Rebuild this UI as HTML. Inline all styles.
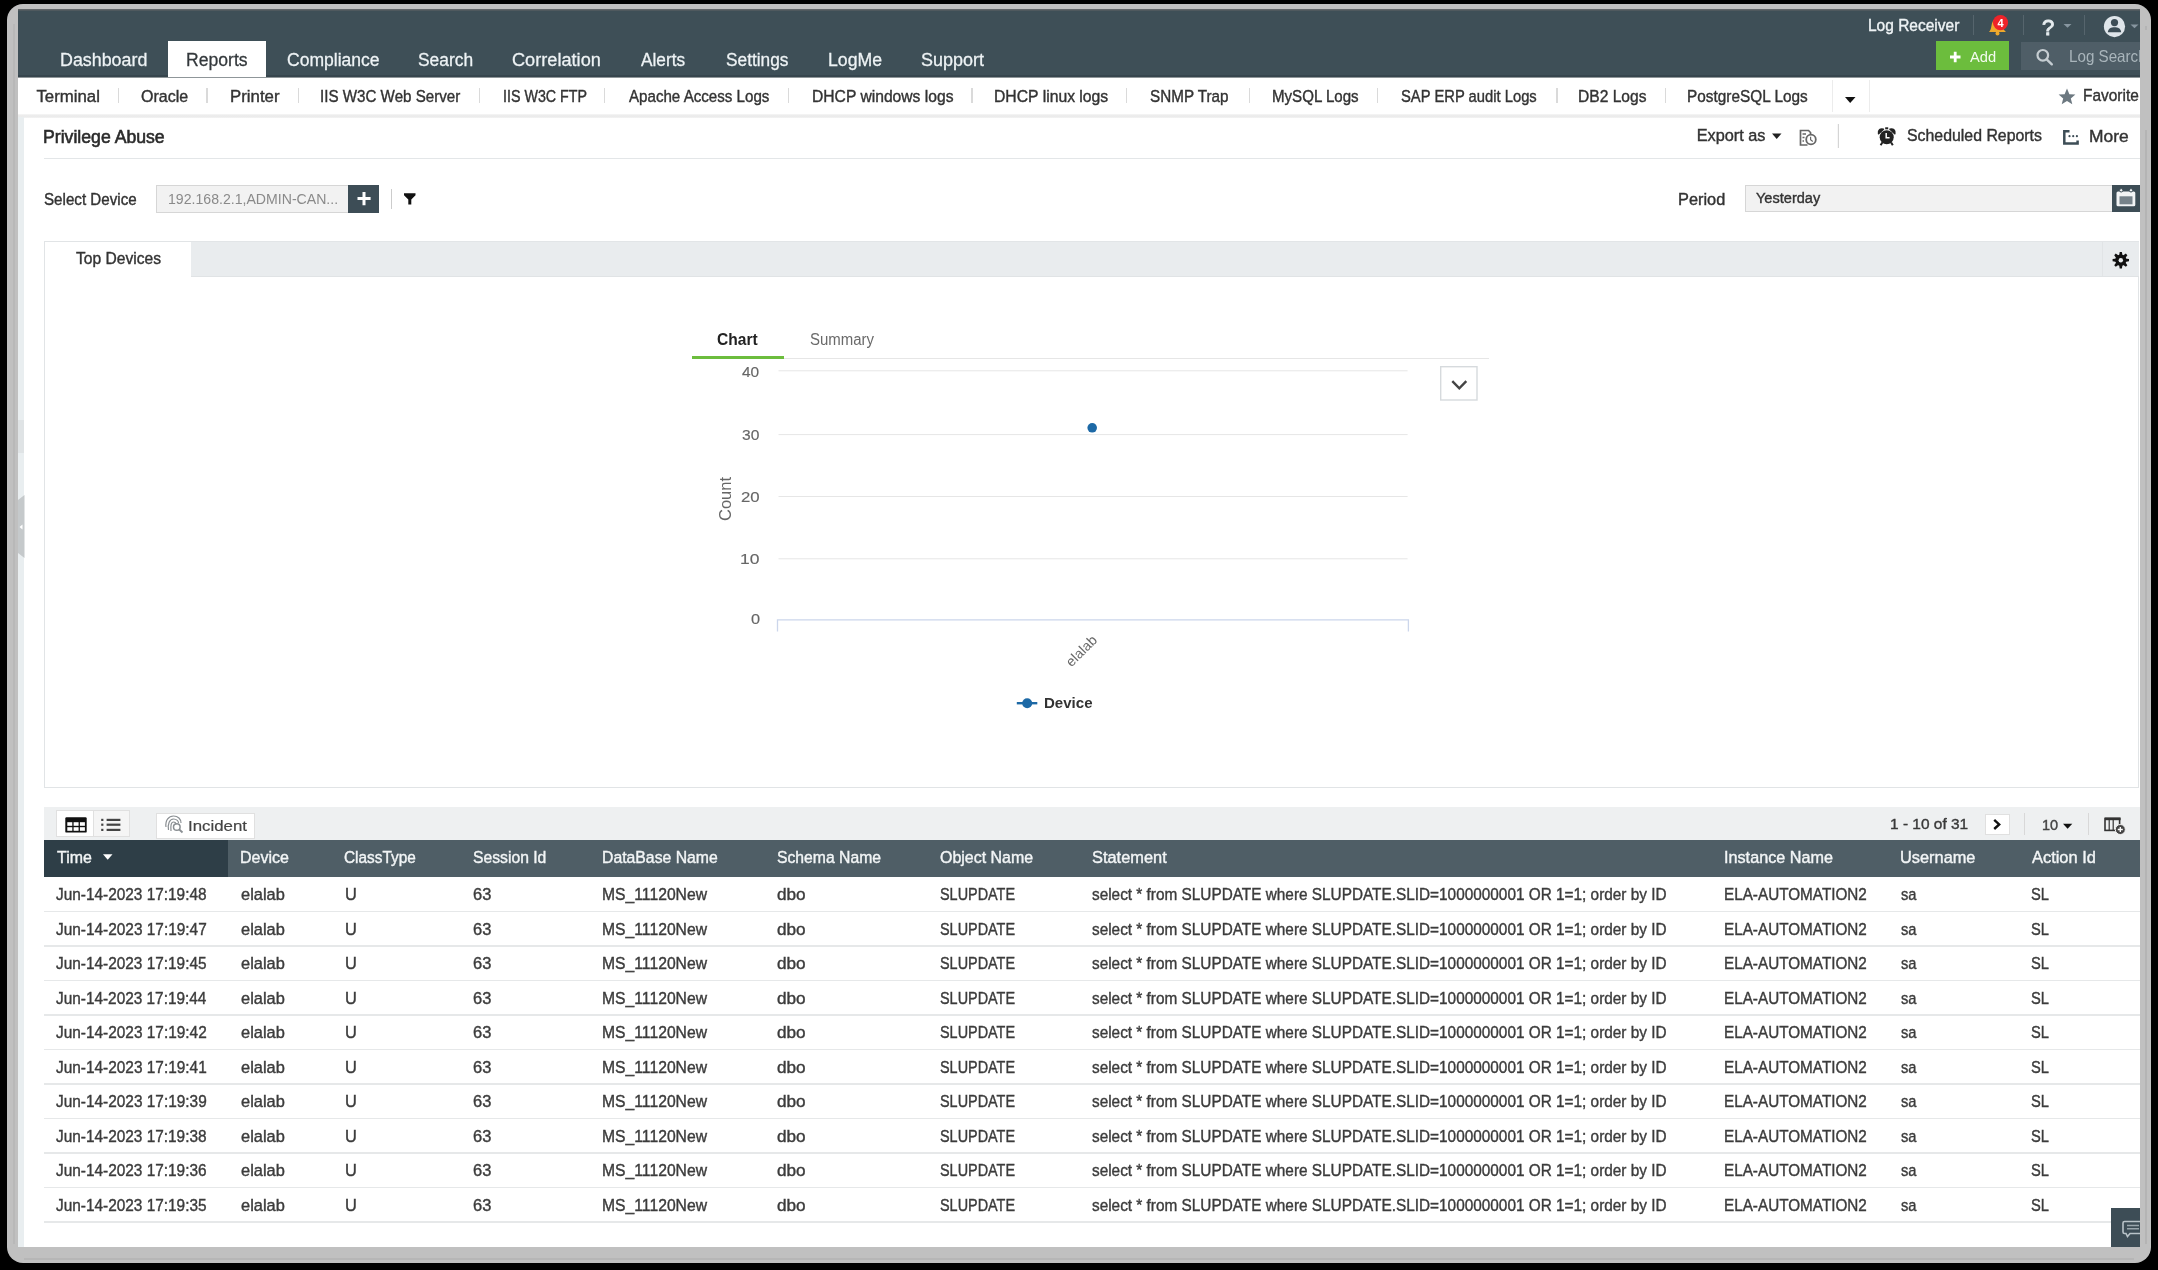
<!DOCTYPE html>
<html><head><meta charset="utf-8"><title>Privilege Abuse</title>
<style>
html,body{margin:0;padding:0}
body{width:2158px;height:1270px;background:#000;position:relative;overflow:hidden;font-family:"Liberation Sans",sans-serif}
.a{position:absolute;box-sizing:border-box}
.t{position:absolute;white-space:nowrap;line-height:1;font-family:"Liberation Sans",sans-serif}
svg{position:absolute;overflow:visible}
</style></head><body><div id="root" style="position:absolute;left:0;top:0;width:2158px;height:1270px;filter:blur(0.6px)">
<!-- frame -->
<div class="a" style="left:7px;top:4px;width:2144px;height:1259px;background:#c0c0c0;border-radius:16px"></div>
<div class="a" style="left:12.6px;top:24px;width:2.9px;height:1220px;background:#b8b8b8"></div>
<div class="a" style="left:2144.5px;top:26px;width:2px;height:1218px;background:#b4b4b4"></div>
<div class="a" style="left:24px;top:1257.5px;width:2110px;height:2px;background:#b6b6b6"></div>
<div class="a" style="left:18px;top:9px;width:2122px;height:1238px;background:#fff"></div>
<!-- header -->
<div class="a" style="left:18px;top:9px;width:2122px;height:68px;background:#3e4f57"></div>
<div class="a" style="left:18px;top:9px;width:2122px;height:1px;background:#626669"></div>
<div class="a" style="left:18px;top:10px;width:2122px;height:1px;background:#4f595e"></div>
<div class="a" style="left:18px;top:75px;width:2122px;height:2px;background:#36454d"></div>
<div class="a" style="left:18px;top:77px;width:2122px;height:1px;background:#8f9699"></div>
<div class="a" style="left:168px;top:41px;width:98px;height:36px;background:#fff"></div>
<!-- header right -->
<div class="a" style="left:1973px;top:15px;width:1px;height:20px;background:#56656d"></div>
<div class="a" style="left:2023px;top:15px;width:1px;height:20px;background:#56656d"></div>
<div class="a" style="left:2084px;top:15px;width:1px;height:20px;background:#56656d"></div>
<div class="a" style="left:1936px;top:41px;width:73px;height:29px;background:#6cbd3d"></div>
<div class="a" style="left:2021px;top:42px;width:119px;height:28px;background:#4f5e67"></div>
<!-- subnav -->
<div class="a" style="left:18px;top:114px;width:2122px;height:4px;background:linear-gradient(#f6f6f6,#e9e9e9 50%,#f3f3f3)"></div>
<!-- left strip -->
<div class="a" style="left:18px;top:117px;width:6px;height:1130px;background:#e9eef0"></div>
<div class="a" style="left:18px;top:420px;width:6px;height:33px;background:#dfe3e5"></div>
<!-- title line -->
<div class="a" style="left:44px;top:158px;width:2096px;height:1px;background:#e3e6e8"></div>
<!-- select device input -->
<div class="a" style="left:156px;top:185px;width:193px;height:28px;background:#f2f2f2;border:1px solid #d6d6d6"></div>
<div class="a" style="left:348px;top:185px;width:31px;height:28px;background:#3d4d56"></div>
<div class="a" style="left:391px;top:189px;width:1px;height:20px;background:#ccc"></div>
<!-- period input -->
<div class="a" style="left:1745px;top:185px;width:368px;height:27px;background:#f2f2f2;border:1px solid #d6d6d6"></div>
<div class="a" style="left:2112px;top:185px;width:28px;height:27px;background:#3d4d56"></div>
<!-- panel -->
<div class="a" style="left:44px;top:241px;width:2095px;height:547px;border:1px solid #e1e4e6"></div>
<div class="a" style="left:191px;top:241px;width:1948px;height:36px;background:#e9ecee;border-bottom:1px solid #e0e3e5;border-top:1px solid #e2e5e7"></div>
<div class="a" style="left:2102px;top:242px;width:1px;height:34px;background:#e1e4e6"></div>
<!-- chart tabs -->
<div class="a" style="left:692px;top:358px;width:797px;height:1px;background:#e6e6e6"></div>
<div class="a" style="left:692px;top:356px;width:92px;height:3px;background:#6cbd3d"></div>
<!-- toolbar band -->
<div class="a" style="left:44px;top:807px;width:2096px;height:34px;background:#eef0f1"></div>
<div class="a" style="left:56px;top:810px;width:74px;height:27px;background:#fff;border:1px solid #e0e0e0"></div>
<div class="a" style="left:93px;top:811px;width:36px;height:25px;background:#f5f5f5;border-left:1px solid #e0e0e0"></div>
<div class="a" style="left:156px;top:813px;width:99px;height:26px;background:#fff;border:1px solid #e0e0e0"></div>
<div class="a" style="left:1985px;top:814px;width:25px;height:21px;background:#fff;border:1px solid #e0e0e0"></div>
<div class="a" style="left:2024px;top:813px;width:1px;height:22px;background:#d8d8d8"></div>
<div class="a" style="left:2088px;top:813px;width:1px;height:22px;background:#d8d8d8"></div>
<!-- table header -->
<div class="a" style="left:44px;top:840px;width:2096px;height:37px;background:#4f5e66"></div>
<div class="a" style="left:44px;top:840px;width:184px;height:37px;background:#2e3e47"></div>
<!-- row seps -->
<div class="a" style="left:44px;top:910.5px;width:2096px;height:1.5px;background:#e6e8e9"></div>
<div class="a" style="left:44px;top:945.0px;width:2096px;height:1.5px;background:#e6e8e9"></div>
<div class="a" style="left:44px;top:979.5px;width:2096px;height:1.5px;background:#e6e8e9"></div>
<div class="a" style="left:44px;top:1014.1px;width:2096px;height:1.5px;background:#e6e8e9"></div>
<div class="a" style="left:44px;top:1048.6px;width:2096px;height:1.5px;background:#e6e8e9"></div>
<div class="a" style="left:44px;top:1083.1px;width:2096px;height:1.5px;background:#e6e8e9"></div>
<div class="a" style="left:44px;top:1117.6px;width:2096px;height:1.5px;background:#e6e8e9"></div>
<div class="a" style="left:44px;top:1152.1px;width:2096px;height:1.5px;background:#e6e8e9"></div>
<div class="a" style="left:44px;top:1186.7px;width:2096px;height:1.5px;background:#e6e8e9"></div>
<div class="a" style="left:44px;top:1221.2px;width:2096px;height:1.5px;background:#e6e8e9"></div>
<!-- subnav separators -->
<div class="a" style="left:117.9px;top:87.5px;width:1.4px;height:15px;background:#dadada"></div>
<div class="a" style="left:206.3px;top:87.5px;width:1.4px;height:15px;background:#dadada"></div>
<div class="a" style="left:298.0px;top:87.5px;width:1.4px;height:15px;background:#dadada"></div>
<div class="a" style="left:478.5px;top:87.5px;width:1.4px;height:15px;background:#dadada"></div>
<div class="a" style="left:604.1px;top:87.5px;width:1.4px;height:15px;background:#dadada"></div>
<div class="a" style="left:787.8px;top:87.5px;width:1.4px;height:15px;background:#dadada"></div>
<div class="a" style="left:971.2px;top:87.5px;width:1.4px;height:15px;background:#dadada"></div>
<div class="a" style="left:1125.5px;top:87.5px;width:1.4px;height:15px;background:#dadada"></div>
<div class="a" style="left:1248.5px;top:87.5px;width:1.4px;height:15px;background:#dadada"></div>
<div class="a" style="left:1376.9px;top:87.5px;width:1.4px;height:15px;background:#dadada"></div>
<div class="a" style="left:1556.2px;top:87.5px;width:1.4px;height:15px;background:#dadada"></div>
<div class="a" style="left:1664.5px;top:87.5px;width:1.4px;height:15px;background:#dadada"></div>
<div class="a" style="left:1831.5px;top:80px;width:1px;height:32px;background:#ececec"></div>
<div class="a" style="left:1868.5px;top:80px;width:1px;height:32px;background:#ececec"></div>
<!-- icons -->
<svg style="left:0;top:0" width="2158" height="1270" viewBox="0 0 2158 1270">
 <!-- subnav caret -->
 <path d="M1845 97 L1855.5 97 L1850.2 103 Z" fill="#111"/>
 <!-- bell -->
 <path d="M1989 32 C1992 29 1991 24 1993 21 C1995 18 1999 18 2001 21 C2003 24 2002 29 2006 32 Z" fill="#eea92c"/>
 <circle cx="1997.5" cy="33.5" r="2" fill="#eea92c"/>
 <circle cx="2000.5" cy="22.6" r="7.6" fill="#ef2329"/>
 <text x="2000.5" y="27" font-family="Liberation Sans" font-weight="700" font-size="11" fill="#fff" text-anchor="middle">4</text>
 <!-- ? -->
 <text x="2048.2" y="35.3" font-family="Liberation Sans" font-weight="400" font-size="22" fill="#e6ecef" stroke="#e6ecef" stroke-width="0.9" text-anchor="middle">?</text>
 <path d="M2063.5 24 L2071.5 24 L2067.5 27.8 Z" fill="#8796a0"/>
 <!-- user -->
 <circle cx="2114.5" cy="26.6" r="10.6" fill="#dfe5ea"/>
 <circle cx="2114.5" cy="22.6" r="3.6" fill="#3d4d56"/>
 <path d="M2107.8 32.2 C2108.5 28 2111 27.2 2114.5 27.2 C2118 27.2 2120.5 28 2121.2 32.2 Z" fill="#3d4d56"/>
 <path d="M2130.5 24.5 L2138.5 24.5 L2134.5 28.3 Z" fill="#8796a0"/>
 <!-- add plus -->
 <path d="M1950 57 H1960.5 M1955.2 51.8 V62.2" stroke="#fff" stroke-width="2.8"/>
 <!-- search icon -->
 <circle cx="2042.8" cy="55.3" r="5.3" fill="none" stroke="#c5cdd2" stroke-width="2.2"/>
 <path d="M2046.7 59.3 L2051.8 64.3" stroke="#c5cdd2" stroke-width="2.4" stroke-linecap="round"/>
 <!-- star -->
 <path d="M2067 88.5 L2069.4 94.2 L2075.4 94.6 L2070.8 98.5 L2072.3 104.2 L2067 101 L2061.7 104.2 L2063.2 98.5 L2058.6 94.6 L2064.6 94.2 Z" fill="#6c7880"/>
 <!-- export caret -->
 <path d="M1772 133.5 L1781.5 133.5 L1776.7 139 Z" fill="#222"/>
 <!-- export icon -->
 <path d="M1807.5 145 H1800.5 V130.5 H1808.5 L1810.5 132.5 V134" fill="none" stroke="#666" stroke-width="1.7"/>
 <path d="M1802.5 134 H1806 M1802.5 137.5 H1804.5 M1802.5 141 H1804" stroke="#666" stroke-width="1.4"/>
 <circle cx="1811" cy="139.5" r="4.8" fill="#fff" stroke="#666" stroke-width="1.8"/>
 <path d="M1810.6 136.8 V139.8 L1812.8 141.5" fill="none" stroke="#666" stroke-width="1.2"/>
 <!-- separator -->
 <rect x="1837.8" y="124" width="1.2" height="24" fill="#d5d5d5"/>
 <!-- alarm clock -->
 <circle cx="1886.7" cy="137.3" r="7" fill="#222"/>
 <path d="M1878.6 133.6 C1878 130 1880.5 128.3 1883.4 129.2 Z" fill="#222" stroke="#222" stroke-width="1.6" stroke-linejoin="round"/>
 <path d="M1894.8 133.6 C1895.4 130 1892.9 128.3 1890 129.2 Z" fill="#222" stroke="#222" stroke-width="1.6" stroke-linejoin="round"/>
 <rect x="1885.2" y="127.3" width="3" height="2" fill="#222"/>
 <path d="M1882.3 142.5 L1880.6 145.3 M1891.1 142.5 L1892.8 145.3" stroke="#222" stroke-width="2"/>
 <path d="M1886.2 133 V137.8 H1889.6" fill="none" stroke="#fff" stroke-width="1.5"/>
 <!-- more icon -->
 <path d="M2069.5 131.2 H2064.3 V143.4 H2077.6 V140.4" fill="none" stroke="#3d4d56" stroke-width="2.5"/>
 <circle cx="2069.5" cy="136.2" r="1.1" fill="#3d4d56"/><circle cx="2073.2" cy="136.2" r="1.1" fill="#3d4d56"/><circle cx="2076.9" cy="136.2" r="1.1" fill="#3d4d56"/>
 <!-- plus in select device -->
 <path d="M357.5 198.6 H370.6 M364 192 V205.2" stroke="#fff" stroke-width="3"/>
 <!-- filter -->
 <path d="M404 193.3 H415.5 V195.3 L411.3 199.5 V204.6 L408.3 204.6 V199.5 L404 195.3 Z" fill="#111"/>
 <!-- calendar -->
 <rect x="2116.5" y="191.5" width="18.8" height="14.8" rx="1.5" fill="#f2f4f5"/>
 <rect x="2119.5" y="196.3" width="13" height="8" fill="#76828a"/>
 <circle cx="2121.2" cy="190.3" r="1.7" fill="#f2f4f5" stroke="#3d4d56" stroke-width="1"/>
 <circle cx="2131" cy="190.3" r="1.7" fill="#f2f4f5" stroke="#3d4d56" stroke-width="1"/>
 <!-- gear -->
 <g transform="translate(2120.8 260.2)" fill="#111">
  <circle r="5.6"/>
  <g id="tooth"><path d="M-1.1 -8.2 H1.1 L1.8 -4 H-1.8 Z"/></g>
  <use href="#tooth" transform="rotate(45)"/><use href="#tooth" transform="rotate(90)"/><use href="#tooth" transform="rotate(135)"/>
  <use href="#tooth" transform="rotate(180)"/><use href="#tooth" transform="rotate(225)"/><use href="#tooth" transform="rotate(270)"/><use href="#tooth" transform="rotate(315)"/>
  <circle r="2.2" fill="#e9ecee"/>
 </g>
 <!-- chart gridlines -->
 <g stroke="#e6e6e6" stroke-width="1">
  <path d="M778.5 370.8 H1407.6 M778.5 434.6 H1407.6 M778.5 496.5 H1407.6 M778.5 558.8 H1407.6"/>
 </g>
 <path d="M777.5 631.5 V619.8 H1408.4 V631.5" fill="none" stroke="#ccd6eb" stroke-width="1.3"/>
 <circle cx="1092.2" cy="427.8" r="4.8" fill="#1d69a6"/>
 <!-- dropdown btn -->
 <rect x="1440.7" y="366.7" width="36.3" height="33.3" fill="#fff" stroke="#d6dadd" stroke-width="1.4"/>
 <path d="M1452.3 381.2 L1459.3 388.3 L1466.3 381.2" fill="none" stroke="#444" stroke-width="2.4"/>
 <!-- legend -->
 <path d="M1016.8 703.2 H1037.3" stroke="#1d69a6" stroke-width="2.4"/>
 <circle cx="1027.2" cy="703.3" r="5" fill="#1d69a6"/>
 <!-- grid icon -->
 <rect x="65.3" y="817.2" width="21.4" height="15.4" rx="1.2" fill="#111"/>
 <g fill="#fff"><rect x="67.3" y="822.2" width="5" height="3.6"/><rect x="73.6" y="822.2" width="5" height="3.6"/><rect x="79.9" y="822.2" width="5" height="3.6"/>
 <rect x="67.3" y="827.2" width="5" height="3.6"/><rect x="73.6" y="827.2" width="5" height="3.6"/><rect x="79.9" y="827.2" width="5" height="3.6"/></g>
 <!-- list icon -->
 <g fill="#444"><rect x="101.2" y="818.8" width="2.2" height="2.2"/><rect x="101.2" y="823.6" width="2.2" height="2.2"/><rect x="101.2" y="828.8" width="2.2" height="2.2"/>
 <rect x="106.6" y="818.8" width="13.8" height="2.2"/><rect x="106.6" y="823.6" width="13.8" height="2.2"/><rect x="106.6" y="828.8" width="13.8" height="2.2"/></g>
 <!-- incident icon -->
 <g fill="none" stroke="#8a8f93" stroke-width="1.2">
  <path d="M166 827 C165 820 169 816 173.5 816 C178 816 181 819 181 823"/>
  <path d="M168.5 830 C167.5 824 169.5 819 173.5 819 C177 819 178.5 821.5 178.5 823"/>
  <path d="M171 831 C170.5 826 171 822 173.5 822 C175.5 822 176 823.5 176 824.5"/>
  <circle cx="176.8" cy="827" r="3.3" stroke-width="1.5"/>
  <path d="M179.3 829.5 L182.5 832.5" stroke-width="1.8"/>
 </g>
 <!-- next chevron -->
 <path d="M1994.2 819.8 L1999.2 824.4 L1994.2 829" fill="none" stroke="#111" stroke-width="2.4"/>
 <!-- 10 caret -->
 <path d="M2063 823.7 L2072.3 823.7 L2067.6 828.8 Z" fill="#111"/>
 <!-- column icon -->
 <rect x="2105" y="818.4" width="14.6" height="12" fill="none" stroke="#333" stroke-width="1.6"/>
 <rect x="2105" y="817.6" width="15.6" height="2.6" fill="#333"/>
 <path d="M2109.2 819 V830.5 M2113.2 819 V830.5" stroke="#333" stroke-width="1.2"/>
 <circle cx="2120.3" cy="829.5" r="5" fill="#444" stroke="#f0f0f0" stroke-width="1"/>
 <path d="M2117.8 829.5 H2122.8 M2120.3 827 V832" stroke="#fff" stroke-width="1.3"/>
 <!-- sort caret -->
 <path d="M103 854.2 L112.5 854.2 L107.7 859.8 Z" fill="#fff"/>
 <!-- left handle -->
 <path d="M18 500 L24.5 495 V558 L18 553 Z" fill="#c5c9cb"/>
 <path d="M19.5 527 L22.5 524.5 V529.5 Z" fill="#fff"/>
</svg>
<!-- chat bubble -->
<div class="a" style="left:2111px;top:1208px;width:29px;height:39px;background:#3d4d56"></div>
<svg style="left:0;top:0" width="2158" height="1270">
 <path d="M2124.5 1221.5 H2140 M2124.5 1221.5 C2123.5 1221.5 2123 1222 2123 1223 V1232 C2123 1233 2123.5 1233.5 2124.5 1233.5 H2126 L2127.5 1236.5 L2130 1233.5 H2140" fill="none" stroke="#b9c3c8" stroke-width="1.6"/>
 <path d="M2127 1225.5 H2139 M2127 1228.8 H2139" stroke="#9aa6ac" stroke-width="1.6"/>
</svg>

<div class="t" style="left:59.57px;top:51.00px;font-size:18.30px;color:#eef3f5;font-weight:400;transform:scaleX(0.9766);transform-origin:0 0;-webkit-text-stroke:0.28px currentColor;">Dashboard</div>
<div class="t" style="left:286.92px;top:51.00px;font-size:18.30px;color:#eef3f5;font-weight:400;transform:scaleX(0.9595);transform-origin:0 0;-webkit-text-stroke:0.28px currentColor;">Compliance</div>
<div class="t" style="left:418.30px;top:51.00px;font-size:18.30px;color:#eef3f5;font-weight:400;transform:scaleX(0.9516);transform-origin:0 0;-webkit-text-stroke:0.28px currentColor;">Search</div>
<div class="t" style="left:512.09px;top:51.00px;font-size:18.30px;color:#eef3f5;font-weight:400;transform:scaleX(0.9936);transform-origin:0 0;-webkit-text-stroke:0.28px currentColor;">Correlation</div>
<div class="t" style="left:641.40px;top:51.00px;font-size:18.30px;color:#eef3f5;font-weight:400;transform:scaleX(0.9431);transform-origin:0 0;-webkit-text-stroke:0.28px currentColor;">Alerts</div>
<div class="t" style="left:725.81px;top:51.00px;font-size:18.30px;color:#eef3f5;font-weight:400;transform:scaleX(0.9454);transform-origin:0 0;-webkit-text-stroke:0.28px currentColor;">Settings</div>
<div class="t" style="left:827.59px;top:51.00px;font-size:18.30px;color:#eef3f5;font-weight:400;transform:scaleX(0.9660);transform-origin:0 0;-webkit-text-stroke:0.28px currentColor;">LogMe</div>
<div class="t" style="left:920.98px;top:51.00px;font-size:18.30px;color:#eef3f5;font-weight:400;transform:scaleX(0.9826);transform-origin:0 0;-webkit-text-stroke:0.28px currentColor;">Support</div>
<div class="t" style="left:185.89px;top:51.00px;font-size:18.30px;color:#33383b;font-weight:400;transform:scaleX(0.9619);transform-origin:0 0;-webkit-text-stroke:0.28px currentColor;">Reports</div>
<div class="t" style="left:1867.76px;top:18.00px;font-size:16.80px;color:#eef3f5;font-weight:400;transform:scaleX(0.9238);transform-origin:0 0;-webkit-text-stroke:0.4px currentColor;">Log Receiver</div>
<div class="t" style="left:1969.70px;top:49.00px;font-size:15.20px;color:#f4fbef;font-weight:400;transform:scaleX(0.9660);transform-origin:0 0;">Add</div>
<div class="t" style="left:2068.79px;top:48.00px;font-size:16.50px;color:#a9b5bb;font-weight:400;transform:scaleX(0.9200);transform-origin:0 0;">Log Search</div>
<div class="t" style="left:36.46px;top:89.00px;font-size:16.80px;color:#333;font-weight:400;-webkit-text-stroke:0.4px currentColor;">Terminal</div>
<div class="t" style="left:141.36px;top:89.00px;font-size:16.80px;color:#333;font-weight:400;transform:scaleX(0.9543);transform-origin:0 0;-webkit-text-stroke:0.4px currentColor;">Oracle</div>
<div class="t" style="left:230.05px;top:89.00px;font-size:16.80px;color:#333;font-weight:400;-webkit-text-stroke:0.4px currentColor;">Printer</div>
<div class="t" style="left:320.24px;top:89.00px;font-size:16.80px;color:#333;font-weight:400;transform:scaleX(0.9027);transform-origin:0 0;-webkit-text-stroke:0.4px currentColor;">IIS W3C Web Server</div>
<div class="t" style="left:502.51px;top:89.00px;font-size:16.80px;color:#333;font-weight:400;transform:scaleX(0.8506);transform-origin:0 0;-webkit-text-stroke:0.4px currentColor;">IIS W3C FTP</div>
<div class="t" style="left:628.90px;top:89.00px;font-size:16.80px;color:#333;font-weight:400;transform:scaleX(0.9010);transform-origin:0 0;-webkit-text-stroke:0.4px currentColor;">Apache Access Logs</div>
<div class="t" style="left:811.55px;top:89.00px;font-size:16.80px;color:#333;font-weight:400;transform:scaleX(0.9326);transform-origin:0 0;-webkit-text-stroke:0.4px currentColor;">DHCP windows logs</div>
<div class="t" style="left:994.24px;top:89.00px;font-size:16.80px;color:#333;font-weight:400;transform:scaleX(0.9372);transform-origin:0 0;-webkit-text-stroke:0.4px currentColor;">DHCP linux logs</div>
<div class="t" style="left:1150.39px;top:89.00px;font-size:16.80px;color:#333;font-weight:400;transform:scaleX(0.9086);transform-origin:0 0;-webkit-text-stroke:0.4px currentColor;">SNMP Trap</div>
<div class="t" style="left:1271.79px;top:89.00px;font-size:16.80px;color:#333;font-weight:400;transform:scaleX(0.8986);transform-origin:0 0;-webkit-text-stroke:0.4px currentColor;">MySQL Logs</div>
<div class="t" style="left:1401.01px;top:89.00px;font-size:16.80px;color:#333;font-weight:400;transform:scaleX(0.8801);transform-origin:0 0;-webkit-text-stroke:0.4px currentColor;">SAP ERP audit Logs</div>
<div class="t" style="left:1578.35px;top:89.00px;font-size:16.80px;color:#333;font-weight:400;transform:scaleX(0.9287);transform-origin:0 0;-webkit-text-stroke:0.4px currentColor;">DB2 Logs</div>
<div class="t" style="left:1686.77px;top:89.00px;font-size:16.80px;color:#333;font-weight:400;transform:scaleX(0.9154);transform-origin:0 0;-webkit-text-stroke:0.4px currentColor;">PostgreSQL Logs</div>
<div class="t" style="left:2082.76px;top:88.00px;font-size:16.80px;color:#333;font-weight:400;transform:scaleX(0.9200);transform-origin:0 0;-webkit-text-stroke:0.4px currentColor;">Favorite</div>
<div class="t" style="left:42.99px;top:128.00px;font-size:18.00px;color:#2b2b2b;font-weight:400;transform:scaleX(0.9807);transform-origin:0 0;-webkit-text-stroke:0.6px #2b2b2b;">Privilege Abuse</div>
<div class="t" style="left:1696.70px;top:127.00px;font-size:16.30px;color:#333;font-weight:400;-webkit-text-stroke:0.4px currentColor;">Export as</div>
<div class="t" style="left:1907.36px;top:127.00px;font-size:16.30px;color:#333;font-weight:400;transform:scaleX(0.9746);transform-origin:0 0;-webkit-text-stroke:0.4px currentColor;">Scheduled Reports</div>
<div class="t" style="left:2089.11px;top:128.00px;font-size:16.30px;color:#333;font-weight:400;transform:scaleX(1.0697);transform-origin:0 0;-webkit-text-stroke:0.4px currentColor;">More</div>
<div class="t" style="left:43.79px;top:192.00px;font-size:16.80px;color:#333;font-weight:400;transform:scaleX(0.9031);transform-origin:0 0;-webkit-text-stroke:0.4px currentColor;">Select Device</div>
<div class="t" style="left:167.71px;top:192.00px;font-size:14.50px;color:#8a8a8a;font-weight:400;transform:scaleX(0.9728);transform-origin:0 0;">192.168.2.1,ADMIN-CAN...</div>
<div class="t" style="left:1678.29px;top:191.00px;font-size:16.50px;color:#333;font-weight:400;transform:scaleX(0.9901);transform-origin:0 0;-webkit-text-stroke:0.4px currentColor;">Period</div>
<div class="t" style="left:1756.21px;top:190.00px;font-size:15.50px;color:#333;font-weight:400;transform:scaleX(0.9389);transform-origin:0 0;-webkit-text-stroke:0.4px currentColor;">Yesterday</div>
<div class="t" style="left:76.09px;top:250.00px;font-size:16.50px;color:#333;font-weight:400;transform:scaleX(0.9467);transform-origin:0 0;-webkit-text-stroke:0.4px currentColor;">Top Devices</div>
<div class="t" style="left:717.38px;top:331.00px;font-size:16.30px;color:#222;font-weight:700;transform:scaleX(0.9555);transform-origin:0 0;">Chart</div>
<div class="t" style="left:810.40px;top:332.00px;font-size:15.80px;color:#6a6a6a;font-weight:400;transform:scaleX(0.9483);transform-origin:0 0;">Summary</div>
<div class="t" style="left:1043.90px;top:695.00px;font-size:15.50px;color:#333;font-weight:700;transform:scaleX(0.9703);transform-origin:0 0;">Device</div>
<div class="t" style="left:188.18px;top:818.00px;font-size:15.40px;color:#444;font-weight:400;transform:scaleX(1.0935);transform-origin:0 0;-webkit-text-stroke:0.2px currentColor;">Incident</div>
<div class="t" style="left:1889.92px;top:816.00px;font-size:15.40px;color:#3a3a3a;font-weight:400;transform:scaleX(1.0037);transform-origin:0 0;-webkit-text-stroke:0.4px currentColor;">1 - 10 of 31</div>
<div class="t" style="left:2041.98px;top:818.00px;font-size:14.80px;color:#444;font-weight:400;transform:scaleX(0.9805);transform-origin:0 0;-webkit-text-stroke:0.4px currentColor;">10</div>
<div class="t" style="left:742.39px;top:365.00px;font-size:14.80px;color:#666;font-weight:400;transform:scaleX(1.0428);transform-origin:0 0;-webkit-text-stroke:0.15px #666;">40</div>
<div class="t" style="left:742.23px;top:428.00px;font-size:14.80px;color:#666;font-weight:400;transform:scaleX(1.0528);transform-origin:0 0;-webkit-text-stroke:0.15px #666;">30</div>
<div class="t" style="left:740.56px;top:490.00px;font-size:14.80px;color:#666;font-weight:400;transform:scaleX(1.1325);transform-origin:0 0;-webkit-text-stroke:0.15px #666;">20</div>
<div class="t" style="left:740.18px;top:552.00px;font-size:14.80px;color:#666;font-weight:400;transform:scaleX(1.1819);transform-origin:0 0;-webkit-text-stroke:0.15px #666;">10</div>
<div class="t" style="left:750.51px;top:612.00px;font-size:14.80px;color:#666;font-weight:400;transform:scaleX(1.1031);transform-origin:0 0;-webkit-text-stroke:0.15px #666;">0</div>
<div class="t" style="left:56.68px;top:849.00px;font-size:16.30px;color:#f2f5f6;font-weight:400;transform:scaleX(0.9798);transform-origin:0 0;-webkit-text-stroke:0.4px currentColor;">Time</div>
<div class="t" style="left:240.12px;top:849.00px;font-size:16.30px;color:#f2f5f6;font-weight:400;transform:scaleX(0.9848);transform-origin:0 0;-webkit-text-stroke:0.4px currentColor;">Device</div>
<div class="t" style="left:344.23px;top:849.00px;font-size:16.30px;color:#f2f5f6;font-weight:400;transform:scaleX(0.9452);transform-origin:0 0;-webkit-text-stroke:0.4px currentColor;">ClassType</div>
<div class="t" style="left:472.97px;top:849.00px;font-size:16.30px;color:#f2f5f6;font-weight:400;transform:scaleX(0.9645);transform-origin:0 0;-webkit-text-stroke:0.4px currentColor;">Session Id</div>
<div class="t" style="left:602.34px;top:849.00px;font-size:16.30px;color:#f2f5f6;font-weight:400;transform:scaleX(0.9694);transform-origin:0 0;-webkit-text-stroke:0.4px currentColor;">DataBase Name</div>
<div class="t" style="left:777.37px;top:849.00px;font-size:16.30px;color:#f2f5f6;font-weight:400;transform:scaleX(0.9666);transform-origin:0 0;-webkit-text-stroke:0.4px currentColor;">Schema Name</div>
<div class="t" style="left:940.36px;top:849.00px;font-size:16.30px;color:#f2f5f6;font-weight:400;transform:scaleX(0.9800);transform-origin:0 0;-webkit-text-stroke:0.4px currentColor;">Object Name</div>
<div class="t" style="left:1092.14px;top:849.00px;font-size:16.30px;color:#f2f5f6;font-weight:400;transform:scaleX(1.0071);transform-origin:0 0;-webkit-text-stroke:0.4px currentColor;">Statement</div>
<div class="t" style="left:1724.04px;top:849.00px;font-size:16.30px;color:#f2f5f6;font-weight:400;transform:scaleX(0.9956);transform-origin:0 0;-webkit-text-stroke:0.4px currentColor;">Instance Name</div>
<div class="t" style="left:1900.05px;top:849.00px;font-size:16.30px;color:#f2f5f6;font-weight:400;transform:scaleX(1.0047);transform-origin:0 0;-webkit-text-stroke:0.4px currentColor;">Username</div>
<div class="t" style="left:2032.00px;top:849.00px;font-size:16.30px;color:#f2f5f6;font-weight:400;transform:scaleX(1.0078);transform-origin:0 0;-webkit-text-stroke:0.4px currentColor;">Action Id</div>
<div class="t" style="left:55.85px;top:887.00px;font-size:16.80px;color:#3c3c3c;font-weight:400;transform:scaleX(0.9167);transform-origin:0 0;-webkit-text-stroke:0.4px currentColor;">Jun-14-2023 17:19:48</div>
<div class="t" style="left:240.74px;top:887.00px;font-size:16.80px;color:#3c3c3c;font-weight:400;transform:scaleX(0.9780);transform-origin:0 0;-webkit-text-stroke:0.4px currentColor;">elalab</div>
<div class="t" style="left:344.95px;top:887.00px;font-size:16.80px;color:#3c3c3c;font-weight:400;transform:scaleX(0.9750);transform-origin:0 0;-webkit-text-stroke:0.4px currentColor;">U</div>
<div class="t" style="left:472.78px;top:887.00px;font-size:16.80px;color:#3c3c3c;font-weight:400;transform:scaleX(0.9803);transform-origin:0 0;-webkit-text-stroke:0.4px currentColor;">63</div>
<div class="t" style="left:602.34px;top:887.00px;font-size:16.80px;color:#3c3c3c;font-weight:400;transform:scaleX(0.9356);transform-origin:0 0;-webkit-text-stroke:0.4px currentColor;">MS_11120New</div>
<div class="t" style="left:777.31px;top:887.00px;font-size:16.80px;color:#3c3c3c;font-weight:400;transform:scaleX(1.0243);transform-origin:0 0;-webkit-text-stroke:0.4px currentColor;">dbo</div>
<div class="t" style="left:940.42px;top:887.00px;font-size:16.80px;color:#3c3c3c;font-weight:400;transform:scaleX(0.8589);transform-origin:0 0;-webkit-text-stroke:0.4px currentColor;">SLUPDATE</div>
<div class="t" style="left:1092.49px;top:887.00px;font-size:16.80px;color:#3c3c3c;font-weight:400;transform:scaleX(0.9148);transform-origin:0 0;-webkit-text-stroke:0.4px currentColor;">select * from SLUPDATE where SLUPDATE.SLID=1000000001 OR 1=1; order by ID</div>
<div class="t" style="left:1724.28px;top:887.00px;font-size:16.80px;color:#3c3c3c;font-weight:400;transform:scaleX(0.9102);transform-origin:0 0;-webkit-text-stroke:0.4px currentColor;">ELA-AUTOMATION2</div>
<div class="t" style="left:1900.91px;top:887.00px;font-size:16.80px;color:#3c3c3c;font-weight:400;transform:scaleX(0.8757);transform-origin:0 0;-webkit-text-stroke:0.4px currentColor;">sa</div>
<div class="t" style="left:2031.41px;top:887.00px;font-size:16.80px;color:#3c3c3c;font-weight:400;transform:scaleX(0.8746);transform-origin:0 0;-webkit-text-stroke:0.4px currentColor;">SL</div>
<div class="t" style="left:55.85px;top:922.00px;font-size:16.80px;color:#3c3c3c;font-weight:400;transform:scaleX(0.9177);transform-origin:0 0;-webkit-text-stroke:0.4px currentColor;">Jun-14-2023 17:19:47</div>
<div class="t" style="left:240.74px;top:922.00px;font-size:16.80px;color:#3c3c3c;font-weight:400;transform:scaleX(0.9780);transform-origin:0 0;-webkit-text-stroke:0.4px currentColor;">elalab</div>
<div class="t" style="left:344.95px;top:922.00px;font-size:16.80px;color:#3c3c3c;font-weight:400;transform:scaleX(0.9750);transform-origin:0 0;-webkit-text-stroke:0.4px currentColor;">U</div>
<div class="t" style="left:472.78px;top:922.00px;font-size:16.80px;color:#3c3c3c;font-weight:400;transform:scaleX(0.9803);transform-origin:0 0;-webkit-text-stroke:0.4px currentColor;">63</div>
<div class="t" style="left:602.34px;top:922.00px;font-size:16.80px;color:#3c3c3c;font-weight:400;transform:scaleX(0.9356);transform-origin:0 0;-webkit-text-stroke:0.4px currentColor;">MS_11120New</div>
<div class="t" style="left:777.31px;top:922.00px;font-size:16.80px;color:#3c3c3c;font-weight:400;transform:scaleX(1.0243);transform-origin:0 0;-webkit-text-stroke:0.4px currentColor;">dbo</div>
<div class="t" style="left:940.42px;top:922.00px;font-size:16.80px;color:#3c3c3c;font-weight:400;transform:scaleX(0.8589);transform-origin:0 0;-webkit-text-stroke:0.4px currentColor;">SLUPDATE</div>
<div class="t" style="left:1092.49px;top:922.00px;font-size:16.80px;color:#3c3c3c;font-weight:400;transform:scaleX(0.9148);transform-origin:0 0;-webkit-text-stroke:0.4px currentColor;">select * from SLUPDATE where SLUPDATE.SLID=1000000001 OR 1=1; order by ID</div>
<div class="t" style="left:1724.28px;top:922.00px;font-size:16.80px;color:#3c3c3c;font-weight:400;transform:scaleX(0.9102);transform-origin:0 0;-webkit-text-stroke:0.4px currentColor;">ELA-AUTOMATION2</div>
<div class="t" style="left:1900.91px;top:922.00px;font-size:16.80px;color:#3c3c3c;font-weight:400;transform:scaleX(0.8757);transform-origin:0 0;-webkit-text-stroke:0.4px currentColor;">sa</div>
<div class="t" style="left:2031.41px;top:922.00px;font-size:16.80px;color:#3c3c3c;font-weight:400;transform:scaleX(0.8746);transform-origin:0 0;-webkit-text-stroke:0.4px currentColor;">SL</div>
<div class="t" style="left:55.85px;top:956.00px;font-size:16.80px;color:#3c3c3c;font-weight:400;transform:scaleX(0.9167);transform-origin:0 0;-webkit-text-stroke:0.4px currentColor;">Jun-14-2023 17:19:45</div>
<div class="t" style="left:240.74px;top:956.00px;font-size:16.80px;color:#3c3c3c;font-weight:400;transform:scaleX(0.9780);transform-origin:0 0;-webkit-text-stroke:0.4px currentColor;">elalab</div>
<div class="t" style="left:344.95px;top:956.00px;font-size:16.80px;color:#3c3c3c;font-weight:400;transform:scaleX(0.9750);transform-origin:0 0;-webkit-text-stroke:0.4px currentColor;">U</div>
<div class="t" style="left:472.78px;top:956.00px;font-size:16.80px;color:#3c3c3c;font-weight:400;transform:scaleX(0.9803);transform-origin:0 0;-webkit-text-stroke:0.4px currentColor;">63</div>
<div class="t" style="left:602.34px;top:956.00px;font-size:16.80px;color:#3c3c3c;font-weight:400;transform:scaleX(0.9356);transform-origin:0 0;-webkit-text-stroke:0.4px currentColor;">MS_11120New</div>
<div class="t" style="left:777.31px;top:956.00px;font-size:16.80px;color:#3c3c3c;font-weight:400;transform:scaleX(1.0243);transform-origin:0 0;-webkit-text-stroke:0.4px currentColor;">dbo</div>
<div class="t" style="left:940.42px;top:956.00px;font-size:16.80px;color:#3c3c3c;font-weight:400;transform:scaleX(0.8589);transform-origin:0 0;-webkit-text-stroke:0.4px currentColor;">SLUPDATE</div>
<div class="t" style="left:1092.49px;top:956.00px;font-size:16.80px;color:#3c3c3c;font-weight:400;transform:scaleX(0.9148);transform-origin:0 0;-webkit-text-stroke:0.4px currentColor;">select * from SLUPDATE where SLUPDATE.SLID=1000000001 OR 1=1; order by ID</div>
<div class="t" style="left:1724.28px;top:956.00px;font-size:16.80px;color:#3c3c3c;font-weight:400;transform:scaleX(0.9102);transform-origin:0 0;-webkit-text-stroke:0.4px currentColor;">ELA-AUTOMATION2</div>
<div class="t" style="left:1900.91px;top:956.00px;font-size:16.80px;color:#3c3c3c;font-weight:400;transform:scaleX(0.8757);transform-origin:0 0;-webkit-text-stroke:0.4px currentColor;">sa</div>
<div class="t" style="left:2031.41px;top:956.00px;font-size:16.80px;color:#3c3c3c;font-weight:400;transform:scaleX(0.8746);transform-origin:0 0;-webkit-text-stroke:0.4px currentColor;">SL</div>
<div class="t" style="left:55.85px;top:991.00px;font-size:16.80px;color:#3c3c3c;font-weight:400;transform:scaleX(0.9158);transform-origin:0 0;-webkit-text-stroke:0.4px currentColor;">Jun-14-2023 17:19:44</div>
<div class="t" style="left:240.74px;top:991.00px;font-size:16.80px;color:#3c3c3c;font-weight:400;transform:scaleX(0.9780);transform-origin:0 0;-webkit-text-stroke:0.4px currentColor;">elalab</div>
<div class="t" style="left:344.95px;top:991.00px;font-size:16.80px;color:#3c3c3c;font-weight:400;transform:scaleX(0.9750);transform-origin:0 0;-webkit-text-stroke:0.4px currentColor;">U</div>
<div class="t" style="left:472.78px;top:991.00px;font-size:16.80px;color:#3c3c3c;font-weight:400;transform:scaleX(0.9803);transform-origin:0 0;-webkit-text-stroke:0.4px currentColor;">63</div>
<div class="t" style="left:602.34px;top:991.00px;font-size:16.80px;color:#3c3c3c;font-weight:400;transform:scaleX(0.9356);transform-origin:0 0;-webkit-text-stroke:0.4px currentColor;">MS_11120New</div>
<div class="t" style="left:777.31px;top:991.00px;font-size:16.80px;color:#3c3c3c;font-weight:400;transform:scaleX(1.0243);transform-origin:0 0;-webkit-text-stroke:0.4px currentColor;">dbo</div>
<div class="t" style="left:940.42px;top:991.00px;font-size:16.80px;color:#3c3c3c;font-weight:400;transform:scaleX(0.8589);transform-origin:0 0;-webkit-text-stroke:0.4px currentColor;">SLUPDATE</div>
<div class="t" style="left:1092.49px;top:991.00px;font-size:16.80px;color:#3c3c3c;font-weight:400;transform:scaleX(0.9148);transform-origin:0 0;-webkit-text-stroke:0.4px currentColor;">select * from SLUPDATE where SLUPDATE.SLID=1000000001 OR 1=1; order by ID</div>
<div class="t" style="left:1724.28px;top:991.00px;font-size:16.80px;color:#3c3c3c;font-weight:400;transform:scaleX(0.9102);transform-origin:0 0;-webkit-text-stroke:0.4px currentColor;">ELA-AUTOMATION2</div>
<div class="t" style="left:1900.91px;top:991.00px;font-size:16.80px;color:#3c3c3c;font-weight:400;transform:scaleX(0.8757);transform-origin:0 0;-webkit-text-stroke:0.4px currentColor;">sa</div>
<div class="t" style="left:2031.41px;top:991.00px;font-size:16.80px;color:#3c3c3c;font-weight:400;transform:scaleX(0.8746);transform-origin:0 0;-webkit-text-stroke:0.4px currentColor;">SL</div>
<div class="t" style="left:55.85px;top:1025.00px;font-size:16.80px;color:#3c3c3c;font-weight:400;transform:scaleX(0.9177);transform-origin:0 0;-webkit-text-stroke:0.4px currentColor;">Jun-14-2023 17:19:42</div>
<div class="t" style="left:240.74px;top:1025.00px;font-size:16.80px;color:#3c3c3c;font-weight:400;transform:scaleX(0.9780);transform-origin:0 0;-webkit-text-stroke:0.4px currentColor;">elalab</div>
<div class="t" style="left:344.95px;top:1025.00px;font-size:16.80px;color:#3c3c3c;font-weight:400;transform:scaleX(0.9750);transform-origin:0 0;-webkit-text-stroke:0.4px currentColor;">U</div>
<div class="t" style="left:472.78px;top:1025.00px;font-size:16.80px;color:#3c3c3c;font-weight:400;transform:scaleX(0.9803);transform-origin:0 0;-webkit-text-stroke:0.4px currentColor;">63</div>
<div class="t" style="left:602.34px;top:1025.00px;font-size:16.80px;color:#3c3c3c;font-weight:400;transform:scaleX(0.9356);transform-origin:0 0;-webkit-text-stroke:0.4px currentColor;">MS_11120New</div>
<div class="t" style="left:777.31px;top:1025.00px;font-size:16.80px;color:#3c3c3c;font-weight:400;transform:scaleX(1.0243);transform-origin:0 0;-webkit-text-stroke:0.4px currentColor;">dbo</div>
<div class="t" style="left:940.42px;top:1025.00px;font-size:16.80px;color:#3c3c3c;font-weight:400;transform:scaleX(0.8589);transform-origin:0 0;-webkit-text-stroke:0.4px currentColor;">SLUPDATE</div>
<div class="t" style="left:1092.49px;top:1025.00px;font-size:16.80px;color:#3c3c3c;font-weight:400;transform:scaleX(0.9148);transform-origin:0 0;-webkit-text-stroke:0.4px currentColor;">select * from SLUPDATE where SLUPDATE.SLID=1000000001 OR 1=1; order by ID</div>
<div class="t" style="left:1724.28px;top:1025.00px;font-size:16.80px;color:#3c3c3c;font-weight:400;transform:scaleX(0.9102);transform-origin:0 0;-webkit-text-stroke:0.4px currentColor;">ELA-AUTOMATION2</div>
<div class="t" style="left:1900.91px;top:1025.00px;font-size:16.80px;color:#3c3c3c;font-weight:400;transform:scaleX(0.8757);transform-origin:0 0;-webkit-text-stroke:0.4px currentColor;">sa</div>
<div class="t" style="left:2031.41px;top:1025.00px;font-size:16.80px;color:#3c3c3c;font-weight:400;transform:scaleX(0.8746);transform-origin:0 0;-webkit-text-stroke:0.4px currentColor;">SL</div>
<div class="t" style="left:55.85px;top:1060.00px;font-size:16.80px;color:#3c3c3c;font-weight:400;transform:scaleX(0.9177);transform-origin:0 0;-webkit-text-stroke:0.4px currentColor;">Jun-14-2023 17:19:41</div>
<div class="t" style="left:240.74px;top:1060.00px;font-size:16.80px;color:#3c3c3c;font-weight:400;transform:scaleX(0.9780);transform-origin:0 0;-webkit-text-stroke:0.4px currentColor;">elalab</div>
<div class="t" style="left:344.95px;top:1060.00px;font-size:16.80px;color:#3c3c3c;font-weight:400;transform:scaleX(0.9750);transform-origin:0 0;-webkit-text-stroke:0.4px currentColor;">U</div>
<div class="t" style="left:472.78px;top:1060.00px;font-size:16.80px;color:#3c3c3c;font-weight:400;transform:scaleX(0.9803);transform-origin:0 0;-webkit-text-stroke:0.4px currentColor;">63</div>
<div class="t" style="left:602.34px;top:1060.00px;font-size:16.80px;color:#3c3c3c;font-weight:400;transform:scaleX(0.9356);transform-origin:0 0;-webkit-text-stroke:0.4px currentColor;">MS_11120New</div>
<div class="t" style="left:777.31px;top:1060.00px;font-size:16.80px;color:#3c3c3c;font-weight:400;transform:scaleX(1.0243);transform-origin:0 0;-webkit-text-stroke:0.4px currentColor;">dbo</div>
<div class="t" style="left:940.42px;top:1060.00px;font-size:16.80px;color:#3c3c3c;font-weight:400;transform:scaleX(0.8589);transform-origin:0 0;-webkit-text-stroke:0.4px currentColor;">SLUPDATE</div>
<div class="t" style="left:1092.49px;top:1060.00px;font-size:16.80px;color:#3c3c3c;font-weight:400;transform:scaleX(0.9148);transform-origin:0 0;-webkit-text-stroke:0.4px currentColor;">select * from SLUPDATE where SLUPDATE.SLID=1000000001 OR 1=1; order by ID</div>
<div class="t" style="left:1724.28px;top:1060.00px;font-size:16.80px;color:#3c3c3c;font-weight:400;transform:scaleX(0.9102);transform-origin:0 0;-webkit-text-stroke:0.4px currentColor;">ELA-AUTOMATION2</div>
<div class="t" style="left:1900.91px;top:1060.00px;font-size:16.80px;color:#3c3c3c;font-weight:400;transform:scaleX(0.8757);transform-origin:0 0;-webkit-text-stroke:0.4px currentColor;">sa</div>
<div class="t" style="left:2031.41px;top:1060.00px;font-size:16.80px;color:#3c3c3c;font-weight:400;transform:scaleX(0.8746);transform-origin:0 0;-webkit-text-stroke:0.4px currentColor;">SL</div>
<div class="t" style="left:55.85px;top:1094.00px;font-size:16.80px;color:#3c3c3c;font-weight:400;transform:scaleX(0.9177);transform-origin:0 0;-webkit-text-stroke:0.4px currentColor;">Jun-14-2023 17:19:39</div>
<div class="t" style="left:240.74px;top:1094.00px;font-size:16.80px;color:#3c3c3c;font-weight:400;transform:scaleX(0.9780);transform-origin:0 0;-webkit-text-stroke:0.4px currentColor;">elalab</div>
<div class="t" style="left:344.95px;top:1094.00px;font-size:16.80px;color:#3c3c3c;font-weight:400;transform:scaleX(0.9750);transform-origin:0 0;-webkit-text-stroke:0.4px currentColor;">U</div>
<div class="t" style="left:472.78px;top:1094.00px;font-size:16.80px;color:#3c3c3c;font-weight:400;transform:scaleX(0.9803);transform-origin:0 0;-webkit-text-stroke:0.4px currentColor;">63</div>
<div class="t" style="left:602.34px;top:1094.00px;font-size:16.80px;color:#3c3c3c;font-weight:400;transform:scaleX(0.9356);transform-origin:0 0;-webkit-text-stroke:0.4px currentColor;">MS_11120New</div>
<div class="t" style="left:777.31px;top:1094.00px;font-size:16.80px;color:#3c3c3c;font-weight:400;transform:scaleX(1.0243);transform-origin:0 0;-webkit-text-stroke:0.4px currentColor;">dbo</div>
<div class="t" style="left:940.42px;top:1094.00px;font-size:16.80px;color:#3c3c3c;font-weight:400;transform:scaleX(0.8589);transform-origin:0 0;-webkit-text-stroke:0.4px currentColor;">SLUPDATE</div>
<div class="t" style="left:1092.49px;top:1094.00px;font-size:16.80px;color:#3c3c3c;font-weight:400;transform:scaleX(0.9148);transform-origin:0 0;-webkit-text-stroke:0.4px currentColor;">select * from SLUPDATE where SLUPDATE.SLID=1000000001 OR 1=1; order by ID</div>
<div class="t" style="left:1724.28px;top:1094.00px;font-size:16.80px;color:#3c3c3c;font-weight:400;transform:scaleX(0.9102);transform-origin:0 0;-webkit-text-stroke:0.4px currentColor;">ELA-AUTOMATION2</div>
<div class="t" style="left:1900.91px;top:1094.00px;font-size:16.80px;color:#3c3c3c;font-weight:400;transform:scaleX(0.8757);transform-origin:0 0;-webkit-text-stroke:0.4px currentColor;">sa</div>
<div class="t" style="left:2031.41px;top:1094.00px;font-size:16.80px;color:#3c3c3c;font-weight:400;transform:scaleX(0.8746);transform-origin:0 0;-webkit-text-stroke:0.4px currentColor;">SL</div>
<div class="t" style="left:55.85px;top:1129.00px;font-size:16.80px;color:#3c3c3c;font-weight:400;transform:scaleX(0.9167);transform-origin:0 0;-webkit-text-stroke:0.4px currentColor;">Jun-14-2023 17:19:38</div>
<div class="t" style="left:240.74px;top:1129.00px;font-size:16.80px;color:#3c3c3c;font-weight:400;transform:scaleX(0.9780);transform-origin:0 0;-webkit-text-stroke:0.4px currentColor;">elalab</div>
<div class="t" style="left:344.95px;top:1129.00px;font-size:16.80px;color:#3c3c3c;font-weight:400;transform:scaleX(0.9750);transform-origin:0 0;-webkit-text-stroke:0.4px currentColor;">U</div>
<div class="t" style="left:472.78px;top:1129.00px;font-size:16.80px;color:#3c3c3c;font-weight:400;transform:scaleX(0.9803);transform-origin:0 0;-webkit-text-stroke:0.4px currentColor;">63</div>
<div class="t" style="left:602.34px;top:1129.00px;font-size:16.80px;color:#3c3c3c;font-weight:400;transform:scaleX(0.9356);transform-origin:0 0;-webkit-text-stroke:0.4px currentColor;">MS_11120New</div>
<div class="t" style="left:777.31px;top:1129.00px;font-size:16.80px;color:#3c3c3c;font-weight:400;transform:scaleX(1.0243);transform-origin:0 0;-webkit-text-stroke:0.4px currentColor;">dbo</div>
<div class="t" style="left:940.42px;top:1129.00px;font-size:16.80px;color:#3c3c3c;font-weight:400;transform:scaleX(0.8589);transform-origin:0 0;-webkit-text-stroke:0.4px currentColor;">SLUPDATE</div>
<div class="t" style="left:1092.49px;top:1129.00px;font-size:16.80px;color:#3c3c3c;font-weight:400;transform:scaleX(0.9148);transform-origin:0 0;-webkit-text-stroke:0.4px currentColor;">select * from SLUPDATE where SLUPDATE.SLID=1000000001 OR 1=1; order by ID</div>
<div class="t" style="left:1724.28px;top:1129.00px;font-size:16.80px;color:#3c3c3c;font-weight:400;transform:scaleX(0.9102);transform-origin:0 0;-webkit-text-stroke:0.4px currentColor;">ELA-AUTOMATION2</div>
<div class="t" style="left:1900.91px;top:1129.00px;font-size:16.80px;color:#3c3c3c;font-weight:400;transform:scaleX(0.8757);transform-origin:0 0;-webkit-text-stroke:0.4px currentColor;">sa</div>
<div class="t" style="left:2031.41px;top:1129.00px;font-size:16.80px;color:#3c3c3c;font-weight:400;transform:scaleX(0.8746);transform-origin:0 0;-webkit-text-stroke:0.4px currentColor;">SL</div>
<div class="t" style="left:55.85px;top:1163.00px;font-size:16.80px;color:#3c3c3c;font-weight:400;transform:scaleX(0.9167);transform-origin:0 0;-webkit-text-stroke:0.4px currentColor;">Jun-14-2023 17:19:36</div>
<div class="t" style="left:240.74px;top:1163.00px;font-size:16.80px;color:#3c3c3c;font-weight:400;transform:scaleX(0.9780);transform-origin:0 0;-webkit-text-stroke:0.4px currentColor;">elalab</div>
<div class="t" style="left:344.95px;top:1163.00px;font-size:16.80px;color:#3c3c3c;font-weight:400;transform:scaleX(0.9750);transform-origin:0 0;-webkit-text-stroke:0.4px currentColor;">U</div>
<div class="t" style="left:472.78px;top:1163.00px;font-size:16.80px;color:#3c3c3c;font-weight:400;transform:scaleX(0.9803);transform-origin:0 0;-webkit-text-stroke:0.4px currentColor;">63</div>
<div class="t" style="left:602.34px;top:1163.00px;font-size:16.80px;color:#3c3c3c;font-weight:400;transform:scaleX(0.9356);transform-origin:0 0;-webkit-text-stroke:0.4px currentColor;">MS_11120New</div>
<div class="t" style="left:777.31px;top:1163.00px;font-size:16.80px;color:#3c3c3c;font-weight:400;transform:scaleX(1.0243);transform-origin:0 0;-webkit-text-stroke:0.4px currentColor;">dbo</div>
<div class="t" style="left:940.42px;top:1163.00px;font-size:16.80px;color:#3c3c3c;font-weight:400;transform:scaleX(0.8589);transform-origin:0 0;-webkit-text-stroke:0.4px currentColor;">SLUPDATE</div>
<div class="t" style="left:1092.49px;top:1163.00px;font-size:16.80px;color:#3c3c3c;font-weight:400;transform:scaleX(0.9148);transform-origin:0 0;-webkit-text-stroke:0.4px currentColor;">select * from SLUPDATE where SLUPDATE.SLID=1000000001 OR 1=1; order by ID</div>
<div class="t" style="left:1724.28px;top:1163.00px;font-size:16.80px;color:#3c3c3c;font-weight:400;transform:scaleX(0.9102);transform-origin:0 0;-webkit-text-stroke:0.4px currentColor;">ELA-AUTOMATION2</div>
<div class="t" style="left:1900.91px;top:1163.00px;font-size:16.80px;color:#3c3c3c;font-weight:400;transform:scaleX(0.8757);transform-origin:0 0;-webkit-text-stroke:0.4px currentColor;">sa</div>
<div class="t" style="left:2031.41px;top:1163.00px;font-size:16.80px;color:#3c3c3c;font-weight:400;transform:scaleX(0.8746);transform-origin:0 0;-webkit-text-stroke:0.4px currentColor;">SL</div>
<div class="t" style="left:55.85px;top:1198.00px;font-size:16.80px;color:#3c3c3c;font-weight:400;transform:scaleX(0.9167);transform-origin:0 0;-webkit-text-stroke:0.4px currentColor;">Jun-14-2023 17:19:35</div>
<div class="t" style="left:240.74px;top:1198.00px;font-size:16.80px;color:#3c3c3c;font-weight:400;transform:scaleX(0.9780);transform-origin:0 0;-webkit-text-stroke:0.4px currentColor;">elalab</div>
<div class="t" style="left:344.95px;top:1198.00px;font-size:16.80px;color:#3c3c3c;font-weight:400;transform:scaleX(0.9750);transform-origin:0 0;-webkit-text-stroke:0.4px currentColor;">U</div>
<div class="t" style="left:472.78px;top:1198.00px;font-size:16.80px;color:#3c3c3c;font-weight:400;transform:scaleX(0.9803);transform-origin:0 0;-webkit-text-stroke:0.4px currentColor;">63</div>
<div class="t" style="left:602.34px;top:1198.00px;font-size:16.80px;color:#3c3c3c;font-weight:400;transform:scaleX(0.9356);transform-origin:0 0;-webkit-text-stroke:0.4px currentColor;">MS_11120New</div>
<div class="t" style="left:777.31px;top:1198.00px;font-size:16.80px;color:#3c3c3c;font-weight:400;transform:scaleX(1.0243);transform-origin:0 0;-webkit-text-stroke:0.4px currentColor;">dbo</div>
<div class="t" style="left:940.42px;top:1198.00px;font-size:16.80px;color:#3c3c3c;font-weight:400;transform:scaleX(0.8589);transform-origin:0 0;-webkit-text-stroke:0.4px currentColor;">SLUPDATE</div>
<div class="t" style="left:1092.49px;top:1198.00px;font-size:16.80px;color:#3c3c3c;font-weight:400;transform:scaleX(0.9148);transform-origin:0 0;-webkit-text-stroke:0.4px currentColor;">select * from SLUPDATE where SLUPDATE.SLID=1000000001 OR 1=1; order by ID</div>
<div class="t" style="left:1724.28px;top:1198.00px;font-size:16.80px;color:#3c3c3c;font-weight:400;transform:scaleX(0.9102);transform-origin:0 0;-webkit-text-stroke:0.4px currentColor;">ELA-AUTOMATION2</div>
<div class="t" style="left:1900.91px;top:1198.00px;font-size:16.80px;color:#3c3c3c;font-weight:400;transform:scaleX(0.8757);transform-origin:0 0;-webkit-text-stroke:0.4px currentColor;">sa</div>
<div class="t" style="left:2031.41px;top:1198.00px;font-size:16.80px;color:#3c3c3c;font-weight:400;transform:scaleX(0.8746);transform-origin:0 0;-webkit-text-stroke:0.4px currentColor;">SL</div>
<div class="a" style="left:2140px;top:30px;width:11px;height:100px;background:#c0c0c0"></div>
<div class="t" style="left:1063px;top:659px;font-size:14px;color:#666;transform:rotate(-45deg);transform-origin:0 0">elalab</div>
<div class="t" style="left:716.5px;top:521px;font-size:16.5px;color:#666;transform:rotate(-90deg);transform-origin:0 0">Count</div>

</div></body></html>
